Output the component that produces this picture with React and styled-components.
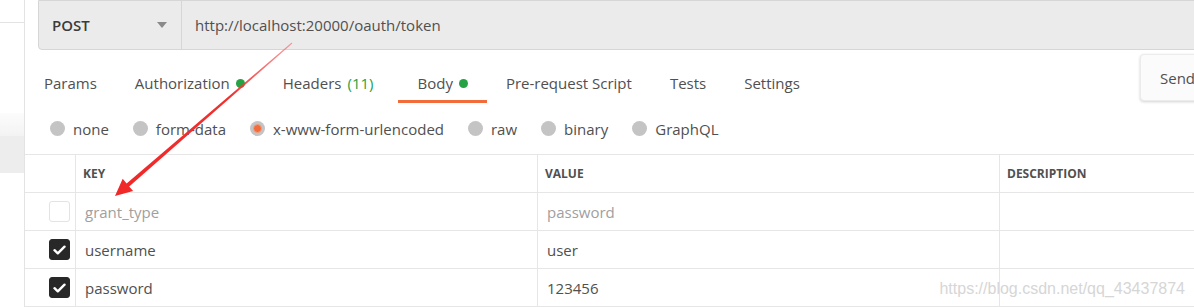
import React from 'react';
import styled, { createGlobalStyle } from 'styled-components';

const GlobalStyle = createGlobalStyle`
    html, body {
        margin: 0;
        padding: 0;
        background: #fff;
    }
    body {
        font-family: "Open Sans", "Noto Sans", sans-serif;
        color: #505050;
        width: 1194px;
        height: 307px;
        overflow: hidden;
    }
`;

const Page = styled.div`
    position: relative;
    display: flex;
    width: 1194px;
    height: 307px;
    overflow: hidden;
`;

const Sidebar = styled.aside`
    flex: 0 0 24px;
    display: flex;
    flex-direction: column;
    border-right: 1px solid #e3e3e3;
`;

const SideBlock = styled.div`
    height: ${props => props.h}px;
    background: ${props => props.bg || '#fff'};
    border-bottom: ${props => props.line ? '1px solid #e3e3e3' : 'none'};
`;

const Main = styled.main`
    flex: 1;
    min-width: 0;
    display: flex;
    flex-direction: column;
    overflow: hidden;
`;

const UrlBar = styled.div`
    display: flex;
    height: 48px;
    margin-left: 13px;
    margin-right: -20px;
    background: #ebebeb;
    border: 1px solid #d6d6d6;
    border-radius: 0 0 0 4px;
    font-size: 15px;
`;

const Method = styled.div`
    flex: 0 0 143px;
    display: flex;
    align-items: center;
    justify-content: space-between;
    padding: 0 14px 0 13px;
    box-sizing: border-box;
    border-right: 1px solid #d6d6d6;
    font-weight: 600;
    color: #3a3a3a;
`;

const Caret = styled.span`
    width: 0;
    height: 0;
    border-left: 5px solid transparent;
    border-right: 5px solid transparent;
    border-top: 6px solid #8a8a8a;
`;

const Url = styled.div`
    display: flex;
    align-items: center;
    padding-left: 13px;
    color: #505050;
`;

const TabRow = styled.div`
    display: flex;
    height: 53px;
`;

const Tab = styled.div`
    display: flex;
    align-items: center;
    gap: 6px;
    padding: 22px ${props => 19 + (props.extra || 0)}px 6px 19px;
    line-height: 22px;
    font-size: 15px;
    color: #505050;
    border-bottom: 3px solid ${props => props.active ? '#f26b3a' : 'transparent'};
    height: 22px;
`;

const Dot = styled.span`
    width: 9px;
    height: 9px;
    border-radius: 50%;
    background: #25a244;
`;

const Count = styled.span`
    color: #25a244;
`;

const SendButton = styled.div`
    margin: 4px -30px 0 auto;
    width: 84px;
    height: 47px;
    box-sizing: border-box;
    padding-left: 19px;
    display: flex;
    align-items: center;
    background: #fbfbfb;
    border: 1px solid #ececec;
    border-radius: 4px;
    box-shadow: 0 1px 3px rgba(0, 0, 0, 0.18);
    font-size: 15px;
    color: #505050;
`;

const RadioRow = styled.div`
    display: flex;
    align-items: center;
    gap: 24px;
    height: 51px;
    padding-left: 25px;
    font-size: 15px;
`;

const Radio = styled.label`
    display: flex;
    align-items: center;
    gap: 8px;
    color: #505050;
`;

const RadioMark = styled.span`
    position: relative;
    width: 15px;
    height: 15px;
    border-radius: 50%;
    background: #c4c4c4;

    &::after {
        content: '';
        display: ${props => props.checked ? 'block' : 'none'};
        position: absolute;
        left: 3px;
        top: 3px;
        width: 9px;
        height: 9px;
        box-sizing: border-box;
        border-radius: 50%;
        background: #f26b3a;
        border: 1px solid #f0a080;
    }
`;

const Table = styled.div`
    display: grid;
    grid-template-columns: 50px 462px 462px 400px;
    border-top: 1px solid #e6e6e6;
`;

const Cell = styled.div`
    display: flex;
    align-items: center;
    height: 38px;
    box-sizing: border-box;
    padding-left: ${props => props.pad || 9}px;
    border-bottom: 1px solid #e6e6e6;
    border-left: ${props => props.first ? 'none' : '1px solid #e6e6e6'};
    font-size: 15px;
    color: ${props => props.muted ? '#a0a0a0' : '#505050'};
    white-space: nowrap;
`;

const HeadCell = styled(Cell)`
    font-size: 12px;
    font-weight: 700;
    padding-left: 7px;
    color: #505050;
`;

const Checkbox = styled.span`
    display: flex;
    align-items: center;
    justify-content: center;
    width: 21px;
    height: 21px;
    box-sizing: border-box;
    border-radius: 3px;
    background: ${props => props.checked ? '#282828' : '#fff'};
    border: 1px solid ${props => props.checked ? '#282828' : '#e3e3e3'};
`;

const Watermark = styled.div`
    position: absolute;
    right: 9px;
    bottom: 9px;
    font-family: "Liberation Sans", Arial, sans-serif;
    font-size: 16px;
    color: #d6d6d6;
`;

const ArrowLayer = styled.svg`
    position: absolute;
    left: 0;
    top: 0;
    pointer-events: none;
`;

const Check = () => (
    <svg width="13" height="10" viewBox="0 0 13 10">
        <path d="M1.5 5.2 L4.8 8.3 L11.5 1.7" fill="none" stroke="#fff" strokeWidth="2.4" strokeLinecap="round" strokeLinejoin="round" />
    </svg>
);

const radios = [
    { label: 'none' },
    { label: 'form-data' },
    { label: 'x-www-form-urlencoded', checked: true },
    { label: 'raw' },
    { label: 'binary' },
    { label: 'GraphQL' },
];

const rows = [
    { key: 'grant_type', value: 'password', placeholder: true },
    { key: 'username', value: 'user' },
    { key: 'password', value: '123456' },
];

export default function App() {
    return (
        <Page>
            <GlobalStyle />
            <Sidebar>
                <SideBlock h={22} line />
                <SideBlock h={90} />
                <SideBlock h={23} bg="linear-gradient(#fcfcfc, #f3f3f3)" />
                <SideBlock h={37} bg="#ededed" />
            </Sidebar>

            <Main>
                <UrlBar>
                    <Method>POST<Caret /></Method>
                    <Url>http://localhost:20000/oauth/token</Url>
                </UrlBar>

                <TabRow>
                    <Tab>Params</Tab>
                    <Tab>Authorization <Dot /></Tab>
                    <Tab extra={6}>Headers <Count>(11)</Count></Tab>
                    <Tab active>Body <Dot /></Tab>
                    <Tab>Pre-request Script</Tab>
                    <Tab>Tests</Tab>
                    <Tab>Settings</Tab>
                    <SendButton>Send</SendButton>
                </TabRow>

                <RadioRow>
                    {radios.map(r => (
                        <Radio key={r.label}>
                            <RadioMark checked={r.checked} />
                            {r.label}
                        </Radio>
                    ))}
                </RadioRow>

                <Table>
                    <HeadCell first />
                    <HeadCell>KEY</HeadCell>
                    <HeadCell>VALUE</HeadCell>
                    <HeadCell>DESCRIPTION</HeadCell>
                    {rows.map(row => (
                        <React.Fragment key={row.key}>
                            <Cell first pad={24}>
                                <Checkbox checked={!row.placeholder}>
                                    {!row.placeholder && <Check />}
                                </Checkbox>
                            </Cell>
                            <Cell muted={row.placeholder}>{row.key}</Cell>
                            <Cell muted={row.placeholder}>{row.value}</Cell>
                            <Cell />
                        </React.Fragment>
                    ))}
                </Table>
            </Main>

            <Watermark>https://blog.csdn.net/qq_43437874</Watermark>

            <ArrowLayer width="1194" height="307" viewBox="0 0 1194 307">
                <defs>
                    <linearGradient id="arrowFade" x1="292" y1="43" x2="115" y2="196" gradientUnits="userSpaceOnUse">
                        <stop offset="0" stopColor="#f26060" stopOpacity="0.6" />
                        <stop offset="0.35" stopColor="#f03030" />
                        <stop offset="1" stopColor="#f02828" />
                    </linearGradient>
                </defs>
                <polygon
                    points="292.3,43.4 129.2,186.4 133.1,191 115,196 122.7,178.8 126.6,183.4 291.7,42.6"
                    fill="url(#arrowFade)"
                />
            </ArrowLayer>
        </Page>
    );
}
